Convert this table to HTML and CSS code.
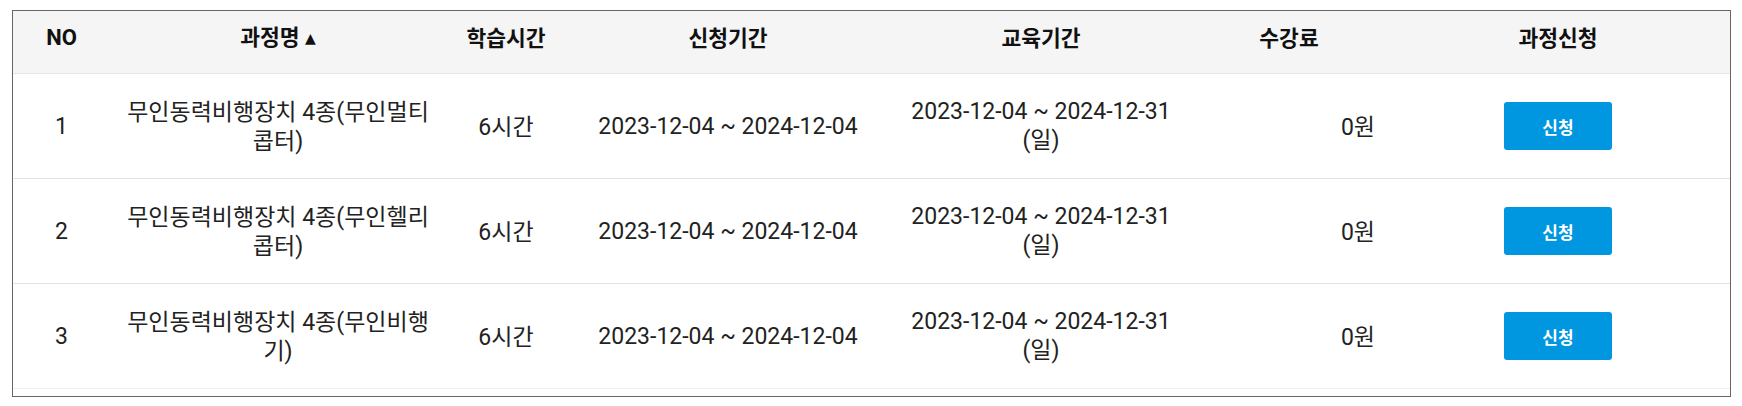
FILE: index.html
```html
<!DOCTYPE html>
<html lang="ko">
<head>
<meta charset="utf-8">
<title>과정 목록</title>
<link rel="stylesheet" href="styles.css">
</head>
<body>
<div class="wrap">
  <table class="course-table">
    <colgroup>
      <col class="c-no"><col class="c-name"><col class="c-time"><col class="c-apply"><col class="c-edu"><col class="c-fee"><col class="c-btn">
    </colgroup>
    <thead>
      <tr>
        <th>NO</th>
        <th><span class="ko">과정명</span> <span class="arrow">▲</span></th>
        <th><span class="ko">학습시간</span></th>
        <th><span class="ko">신청기간</span></th>
        <th><span class="ko">교육기간</span></th>
        <th><span class="ko">수강료</span></th>
        <th><span class="ko">과정신청</span></th>
      </tr>
    </thead>
    <tbody>
      <tr>
        <td>1</td>
        <td class="name"><span class="ko">무인동력비행장치</span> 4<span class="ko">종</span>(<span class="ko">무인멀티콥터</span>)</td>
        <td>6<span class="ko">시간</span></td>
        <td>2023-12-04 ~ 2024-12-04</td>
        <td>2023-12-04 ~ 2024-12-31 (<span class="ko">일</span>)</td>
        <td class="fee">0<span class="ko">원</span></td>
        <td><button class="btn" type="button">신청</button></td>
      </tr>
      <tr>
        <td>2</td>
        <td class="name"><span class="ko">무인동력비행장치</span> 4<span class="ko">종</span>(<span class="ko">무인헬리콥터</span>)</td>
        <td>6<span class="ko">시간</span></td>
        <td>2023-12-04 ~ 2024-12-04</td>
        <td>2023-12-04 ~ 2024-12-31 (<span class="ko">일</span>)</td>
        <td class="fee">0<span class="ko">원</span></td>
        <td><button class="btn" type="button">신청</button></td>
      </tr>
      <tr class="last">
        <td>3</td>
        <td class="name"><span class="ko">무인동력비행장치</span> 4<span class="ko">종</span>(<span class="ko">무인비행기</span>)</td>
        <td>6<span class="ko">시간</span></td>
        <td>2023-12-04 ~ 2024-12-04</td>
        <td>2023-12-04 ~ 2024-12-31 (<span class="ko">일</span>)</td>
        <td class="fee">0<span class="ko">원</span></td>
        <td><button class="btn" type="button">신청</button></td>
      </tr>
    </tbody>
  </table>
</div>
</body>
</html>
```
FILE: styles.css
```css
html, body {
  margin: 0;
  padding: 0;
  background: #fff;
}
body {
  font-family: Roboto, "Noto Sans CJK KR", sans-serif;
  color: #222;
}
.wrap {
  margin: 10px 11px 0 12px;
  border: 1px solid #666;
  padding-bottom: 7px;
}
.course-table {
  width: 100%;
  table-layout: fixed;
  border-collapse: collapse;
}
.c-no { width: 97px; }
.c-name { width: 336px; }
.c-time { width: 120px; }
.c-apply { width: 324px; }
.c-edu { width: 302px; }
.c-fee { width: 194px; }
.ko {
  font-family: "Noto Sans CJK KR", sans-serif;
  font-size: 23px;
}
.course-table th {
  background: #f5f5f5;
  font-weight: 700;
  font-size: 22px;
  line-height: 27px;
  color: #111;
  padding: 11px 6px 21px;
  border-bottom: 1px solid #e6e6e6;
  text-align: center;
  white-space: nowrap;
}
.course-table th .ko {
  font-weight: 700;
  font-size: 21.5px;
}
.arrow {
  font-family: "DejaVu Sans", sans-serif;
  font-size: 14px;
  vertical-align: 2px;
}
.course-table td {
  height: 104px;
  padding: 0 20px;
  font-size: 23px;
  line-height: 27px;
  text-align: center;
  vertical-align: middle;
  border-bottom: 1px solid #e3e3e3;
}
.course-table td.name {
  padding: 0 14px;
}
.course-table tr.last td {
  border-bottom-color: #efefef;
}
.course-table td.fee {
  text-align: right;
  padding-right: 11px;
}
.btn {
  display: inline-flex;
  align-items: center;
  justify-content: center;
  width: 108px;
  height: 48px;
  border: 0;
  border-radius: 3px;
  background: #0096e0;
  color: #fff;
  font-family: "Noto Sans CJK KR", sans-serif;
  font-weight: 700;
  font-size: 17px;
  padding: 0;
  vertical-align: middle;
}
```
